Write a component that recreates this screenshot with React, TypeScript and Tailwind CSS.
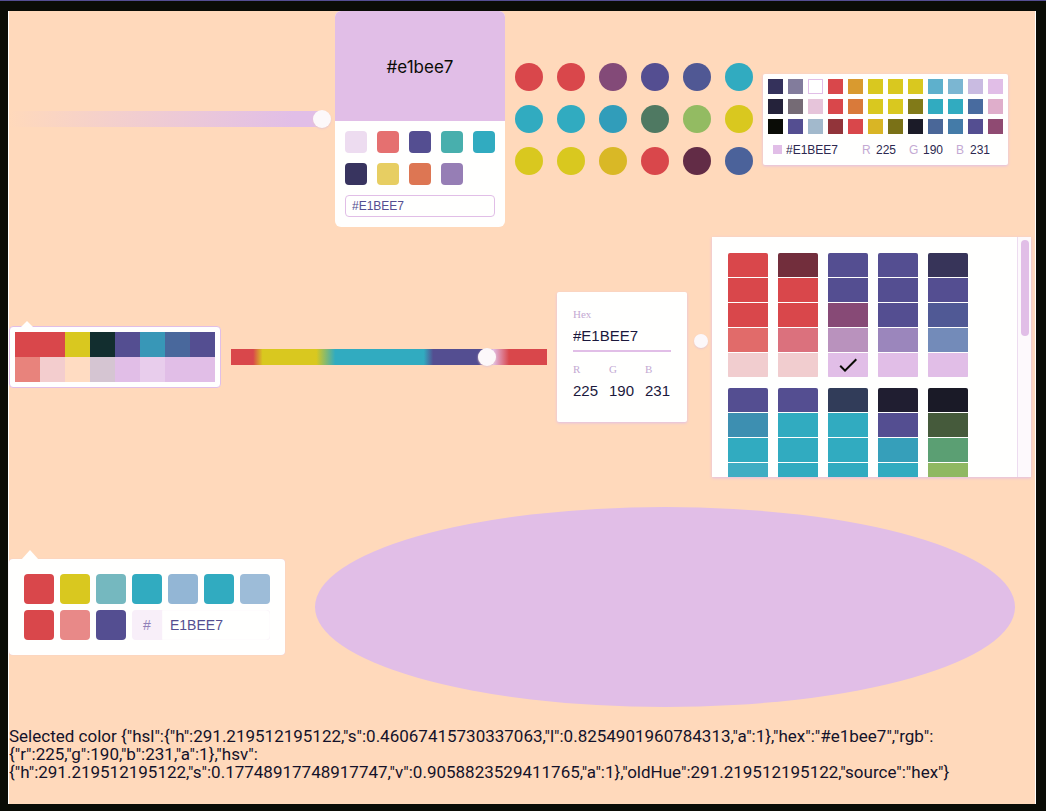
import React from "react";

const blockColors = ["#eddcf0", "#e57070", "#544e91", "#48afad", "#31abc0", "#38345f", "#e7ce62", "#dd7653", "#967eb5"];

const circleColors = [
  "#d9474b", "#d9474b", "#834a78", "#544e91", "#505894", "#31abc0",
  "#31abc0", "#31abc0", "#319dba", "#4f7962", "#93bb62", "#d9c81f",
  "#d9c81f", "#d9c81f", "#d9b826", "#d9474b", "#622c46", "#4b629a",
];

const compactColors = [
  "#34315b", "#827c9c", "#ffffff", "#d9474b", "#d99a2f", "#d9c81f", "#d9c81f", "#d9c81f", "#5eb0cc", "#7bb6d2", "#c9bbe1", "#e1bee7",
  "#24223a", "#756b75", "#e6c4da", "#d9474b", "#d97a3a", "#d9c81f", "#d9c81f", "#817a18", "#31abc0", "#31abc0", "#486b9f", "#dfaecb",
  "#0a0c06", "#544e91", "#a2b9cc", "#92343a", "#d9474b", "#d9b525", "#7a7117", "#1b1b28", "#4a6798", "#447ba8", "#544e91", "#8f4a72",
];

const githubColors = [
  "#d9474b", "#d9474b", "#d9c81f", "#122e2f", "#544e91", "#3897b7", "#49689c", "#544e91",
  "#e8837c", "#f3cdce", "#ffdcc2", "#d5c5d2", "#e1bee7", "#e8cdec", "#e1bee7", "#e1bee7",
];

const twitterColors = ["#d9474b", "#d9c81f", "#75b8bf", "#31abc0", "#93b6d5", "#31abc0", "#9dbcd8", "#d9474b", "#e88988", "#544e91"];

const swatchGroups = [
  [
    ["#d9474b", "#d9474b", "#d9474b", "#e16b6a", "#f1cdcf"],
    ["#722e3c", "#d9474b", "#d9474b", "#db717d", "#f1cdcf"],
    ["#544e91", "#544e91", "#874a76", "#b992bd", "#e1bee7"],
    ["#544e91", "#544e91", "#544e91", "#9b86bc", "#e1bee7"],
    ["#373459", "#544e91", "#505995", "#738bb9", "#e1bee7"],
  ],
  [
    ["#544e91", "#3d8fb1", "#31abc0", "#3fadc3", "#8fd0dc"],
    ["#544e91", "#31abc0", "#31abc0", "#31abc0", "#8fd0dc"],
    ["#313c59", "#31abc0", "#31abc0", "#31abc0", "#8fd0dc"],
    ["#201e31", "#544e91", "#369fba", "#31abc0", "#8fd0dc"],
    ["#1a1a27", "#455a3b", "#5b9f73", "#8fb862", "#d9c81f"],
  ],
];

const selected = {
  hsl: { h: 291.219512195122, s: 0.46067415730337063, l: 0.8254901960784313, a: 1 },
  hex: "#e1bee7",
  rgb: { r: 225, g: 190, b: 231, a: 1 },
  hsv: { h: 291.219512195122, s: 0.17748917748917747, v: 0.9058823529411765, a: 1 },
  oldHue: 291.219512195122,
  source: "hex",
};

function Swatch({ color, className, children }: { color: string; className: string; children?: React.ReactNode }) {
  return (
    <button type="button" aria-label={color} className={className} style={{ backgroundColor: color }}>
      {children}
    </button>
  );
}

const thumb =
  "block appearance-none bg-transparent [&::-webkit-slider-thumb]:appearance-none [&::-webkit-slider-thumb]:rounded-full [&::-webkit-slider-thumb]:bg-[#fcf8fa] [&::-webkit-slider-thumb]:shadow-[0_1px_2px_#e8c8cc]";
const barThumb = "-ml-1.5 h-4 w-[calc(100%+12px)] [&::-webkit-slider-thumb]:size-[18px]";

function AlphaSlider() {
  return (
    <div className="h-4 w-[316px] shrink-0 bg-linear-to-r from-[#ffd9bb] to-[#e1bee7] to-90%">
      <input type="range" aria-label="Alpha" min={0} max={100} defaultValue={100} className={`${thumb} ${barThumb}`} />
    </div>
  );
}

function HueSlider() {
  return (
    <div className="h-4 w-[316px] shrink-0 bg-[linear-gradient(to_right,#d9474b_7%,#d9c81f_10%,#d9c81f_27%,#31abc0_33%,#31abc0_61%,#544e91_64%,#544e91_80%,#e1bee7_83%,#d9474b_88%)]">
      <input type="range" aria-label="Hue" min={0} max={360} defaultValue={294} className={`${thumb} ${barThumb}`} />
    </div>
  );
}

function BlockPicker() {
  return (
    <section className="w-[170px] shrink-0 overflow-hidden rounded-md bg-[#fffffe]">
      <div className="flex h-[110px] items-center justify-center bg-[#e1bee7] pt-1 font-[Inter,sans-serif] text-[17px] text-[#0a0c06]">
        #e1bee7
      </div>
      <div className="flex flex-col gap-2.5 p-2.5">
        <div className="grid grid-cols-5 gap-2.5">
          {blockColors.map((c, i) => (
            <Swatch key={i} color={c} className="size-[22px] rounded" />
          ))}
        </div>
        <input
          aria-label="Hex color"
          defaultValue="#E1BEE7"
          className="h-[22px] w-full rounded border border-[#e1bee7] px-1.5 text-xs text-[#544e91]"
        />
      </div>
    </section>
  );
}

function CirclePicker() {
  return (
    <div className="grid shrink-0 grid-cols-6 gap-3.5">
      {circleColors.map((c, i) => (
        <Swatch key={i} color={c} className="size-7 rounded-full" />
      ))}
    </div>
  );
}

function CompactPicker() {
  return (
    <section className="w-[245px] shrink-0 rounded-xs bg-[#fffffe] p-[5px] shadow-[0_1px_3px_#e1bee7]">
      <div className="grid grid-cols-12 gap-[5px]">
        {compactColors.map((c, i) => (
          <Swatch key={i} color={c} className={c === "#ffffff" ? "size-[15px] border border-[#e1bee7]" : "size-[15px]"} />
        ))}
      </div>
      <div className="mt-[7px] mb-px flex h-[18px] items-center pl-[5px] text-xs text-[#2c2850]">
        <span className="mr-1 size-[9px] bg-[#e1bee7]" />
        <input aria-label="Hex" defaultValue="#E1BEE7" className="mr-5 w-14 bg-transparent" />
        {[["R", 225], ["G", 190], ["B", 231]].map(([name, value]) => (
          <label key={name} className="flex w-[47px] items-center text-[#c4a9d3]">
            <span className="w-3.5">{name}</span>
            <input defaultValue={value} className="w-7 bg-transparent text-[#2c2850]" />
          </label>
        ))}
      </div>
    </section>
  );
}

function GithubPicker() {
  return (
    <section className="relative w-[212px] shrink-0 rounded border border-[#e1bee7] bg-[#fffffe] p-[5px]">
      <svg className="absolute -top-[7px] left-2.5" width="14" height="8" viewBox="0 0 14 8">
        <path d="M0 8 L7 1 L14 8Z" fill="#fffffe" />
      </svg>
      <div className="grid grid-cols-8">
        {githubColors.map((c, i) => (
          <Swatch key={i} color={c} className="h-[25px]" />
        ))}
      </div>
    </section>
  );
}

function MaterialPicker() {
  return (
    <section className="h-[130px] w-[130px] shrink-0 rounded-xs bg-[#fffffe] p-4 text-[15px] text-[#1b183c] shadow-[0_1px_3px_#e1bee7]">
      <label className="block">
        <span className="block h-3 font-['Liberation_Serif',serif] text-[11px] leading-3 text-[#c4a9d3]">Hex</span>
        <input defaultValue="#E1BEE7" className="block h-8 w-full border-b-2 border-[#e1bee7] bg-transparent" />
      </label>
      <div className="mt-[11px] grid grid-cols-3 gap-[10px]">
        {[["R", 225], ["G", 190], ["B", 231]].map(([name, value]) => (
          <label key={name} className="block">
            <span className="block h-3 font-['Liberation_Serif',serif] text-[11px] leading-3 text-[#c4a9d3]">{name}</span>
            <input defaultValue={value} className="block h-[30px] w-7 bg-transparent" />
          </label>
        ))}
      </div>
    </section>
  );
}

function ShadeSlider() {
  return (
    <div className="w-[5px] shrink-0 pb-8">
      <input
        type="range"
        aria-label="Shade"
        className={`${thumb} -ml-[3px] size-3.5 [&::-webkit-slider-thumb]:size-3.5`}
      />
    </div>
  );
}

function SwatchesPicker() {
  return (
    <section className="flex h-60 min-w-0 max-w-[319px] flex-1 overflow-hidden bg-[#fffffe] shadow-[0_1px_3px_#e1bee7]">
      <div className="flex-1 overflow-hidden pt-4 pl-4">
        {swatchGroups.map((group, g) => (
          <div key={g} className="mb-2.5 flex gap-2.5">
            {group.map((column, c) => (
              <div key={c} className="flex w-10 flex-col gap-px overflow-hidden rounded-xs pb-px">
                {column.map((color, i) => (
                  <Swatch key={i} color={color} className="flex h-6 w-10 shrink-0 items-center justify-center">
                    {g === 0 && c === 2 && i === 4 && (
                      <svg width="24" height="24" viewBox="0 0 24 24" fill="#0a0c06">
                        <path d="M21,7L9,19L3.5,13.5L4.91,12.09L9,16.17L19.59,5.59L21,7Z" />
                      </svg>
                    )}
                  </Swatch>
                ))}
              </div>
            ))}
          </div>
        ))}
      </div>
      <div className="w-3.5 border-l border-[#eddcf0] bg-[#fdf9fc] px-[3px] pt-[3px]">
        <div className="h-24 w-2 rounded-full bg-[#e1bee7]" />
      </div>
    </section>
  );
}

function TwitterPicker() {
  return (
    <section className="relative w-[276px] shrink-0 rounded bg-[#fffffe] p-[15px] shadow-[0_0_1px_#e1bee7]">
      <svg className="absolute -top-[9px] left-3" width="18" height="10" viewBox="0 0 18 10">
        <path d="M0 10 L9 0 L18 10Z" fill="#fffffe" />
      </svg>
      <div className="flex flex-wrap gap-1.5">
        {twitterColors.map((c, i) => (
          <Swatch key={i} color={c} className="size-[30px] rounded" />
        ))}
        <label className="flex h-[30px] items-center">
          <span className="flex size-[30px] items-center justify-center rounded-l bg-[#f8eff9] text-sm text-[#9180b8]">#</span>
          <input aria-label="Hex" defaultValue="E1BEE7" className="h-[30px] w-[108px] rounded-r bg-transparent px-2 text-sm text-[#544e91] shadow-[inset_0_0_1px_#eddcf0]" />
        </label>
      </div>
    </section>
  );
}

export default function App() {
  return (
    <div className="min-h-screen border-t border-[#544e91] bg-[#0a0c06] pt-2.5 pr-2.5 pb-[7px] pl-2 font-['Liberation_Sans',sans-serif]">
      <main className="flex min-h-[793px] flex-col gap-2.5 border-x border-[#fffffe] bg-[#ffd9bb]">
        <div className="flex items-center gap-2.5">
          <AlphaSlider />
          <BlockPicker />
          <CirclePicker />
          <CompactPicker />
        </div>
        <div className="flex items-center gap-2.5">
          <GithubPicker />
          <HueSlider />
          <MaterialPicker />
          <ShadeSlider />
          <SwatchesPicker />
        </div>
        <div className="flex items-center gap-2.5 pt-5 pb-2.5">
          <TwitterPicker />
          <div className="mx-5 h-[200px] flex-1 rounded-[50%] bg-[#e1bee7]" />
        </div>
        <p className="font-[Roboto,sans-serif] text-[17px] leading-[18px] text-[#14122a]">
          {`Selected color ${JSON.stringify(selected)}`}
        </p>
      </main>
    </div>
  );
}
